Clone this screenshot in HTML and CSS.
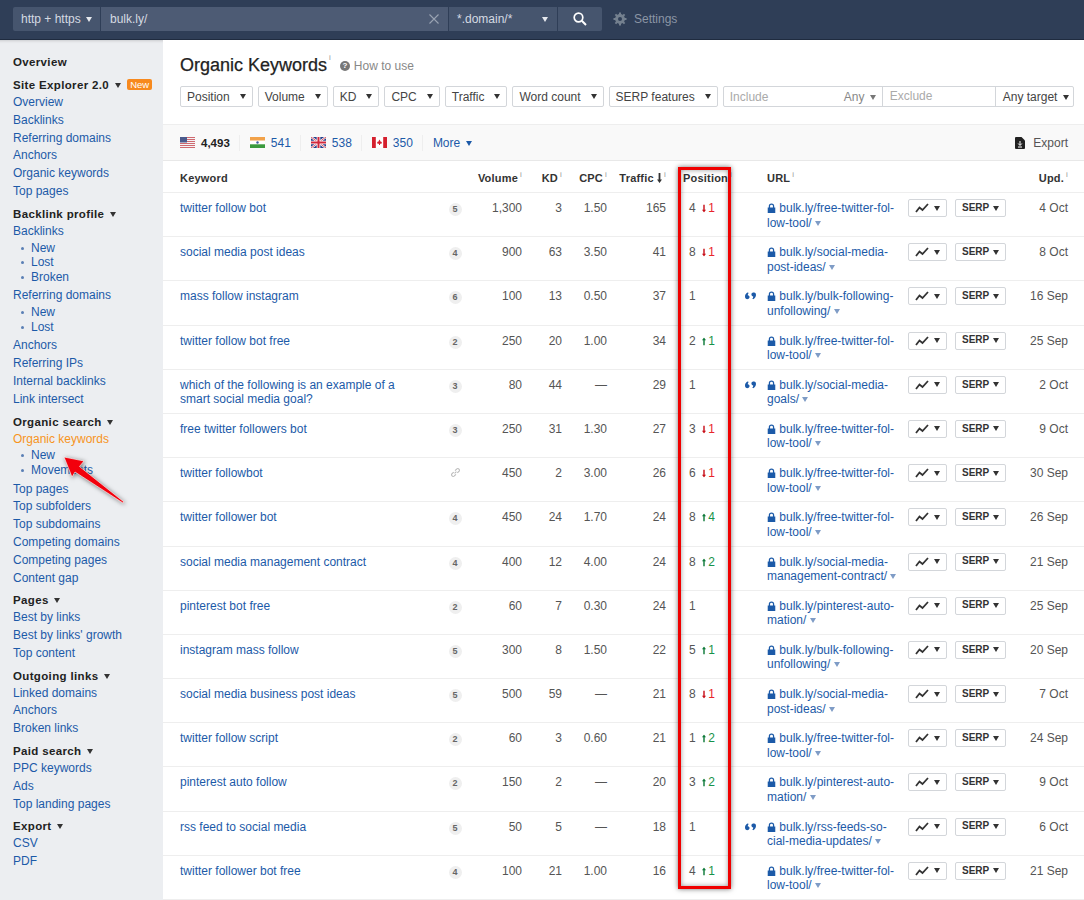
FILE: index.html
```html
<!DOCTYPE html>
<html lang="en">
<head>
<meta charset="UTF-8" />
<title>Organic Keywords</title>
<link rel="stylesheet" href="styles.css">
</head>
<body>

<!-- Shared icons -->
<svg class="icon-defs" aria-hidden="true">
  <symbol id="i-lock" viewBox="0 0 10 11"><path d="M2 5V3.4a3 3 0 0 1 6 0V5h1.2v6H.8V5zm1.4 0h3.2V3.4a1.6 1.6 0 0 0-3.2 0z"/></symbol>
  <symbol id="i-quote" viewBox="0 0 12 8"><path d="M3 0C1.400 1 0 2.500 0 4.600 0 6.500 1.100 7.600 2.500 7.600S5 6.500 5 5.200 4.200 3.200 3 3.100c0-1 .4-1.800 1-2.400zM9 7.600c1.600-1 3-2.500 3-4.600C12 1.100 10.900 0 9.500 0S7 1.100 7 2.400 7.800 4.400 9 4.500c0 1-.4 1.800-1 2.400z"/></symbol>
  <symbol id="i-trend" viewBox="0 0 14 10"><path d="M1 9l3.500-4.500L7.500 7 13 1" fill="none" stroke="currentColor" stroke-width="1.800"/></symbol>
  <symbol id="i-down" viewBox="0 0 5 10"><path d="M1.600 0h1.800v6.500H5L2.500 10 0 6.500h1.600z"/></symbol>
  <symbol id="i-up" viewBox="0 0 5 10"><path d="M1.600 10h1.800V3.500H5L2.500 0 0 3.500h1.600z"/></symbol>
</svg>

<!-- Top bar -->
<div class="top-bar">
  <div class="search-group">
    <div class="sg-proto">http + https <span class="caret caret-light"></span></div>
    <div class="sg-url">bulk.ly/
      <svg class="sg-clear" viewBox="0 0 10 10"><path d="M.5.500l9 9M9.500.500l-9 9" stroke="#9aa3b2" stroke-width="1.100"/></svg>
    </div>
    <div class="sg-mode">*.domain/* <span class="caret caret-light"></span></div>
    <div class="sg-go">
      <svg viewBox="0 0 14 14" width="14" height="14"><circle cx="5.500" cy="5.500" r="4.300" fill="none" stroke="#fff" stroke-width="1.700"/><path d="M8.800 8.800L13 13" stroke="#fff" stroke-width="2"/></svg>
    </div>
  </div>
  <div class="settings">
    <svg viewBox="0 0 14 14" width="14" height="14"><circle cx="7" cy="7" r="3.600" fill="none" stroke="#74808f" stroke-width="2.600"/><path d="M7 .500v13M.500 7h13M2.400 2.400l9.200 9.200M11.600 2.400l-9.200 9.200" stroke="#74808f" stroke-width="2"/><circle cx="7" cy="7" r="2" fill="#2f3e57"/></svg>
    Settings
  </div>
</div>

<div class="layout">

  <!-- Sidebar -->
  <div class="sidebar">
    <div class="side-head side-first">Overview</div>
    <div class="side-head side-group">Site Explorer 2.0 <span class="caret"></span> <span class="new-badge">New</span></div>
    <a>Overview</a><a>Backlinks</a><a>Referring domains</a><a>Anchors</a><a>Organic keywords</a><a>Top pages</a>
    <div class="side-head side-group">Backlink profile <span class="caret"></span></div>
    <a>Backlinks</a>
    <ul><li>New</li><li>Lost</li><li>Broken</li></ul>
    <a>Referring domains</a>
    <ul><li>New</li><li>Lost</li></ul>
    <a>Anchors</a><a>Referring IPs</a><a>Internal backlinks</a><a>Link intersect</a>
    <div class="side-head side-group">Organic search <span class="caret"></span></div>
    <a class="active">Organic keywords</a>
    <ul><li>New</li><li>Movements</li></ul>
    <a>Top pages</a><a>Top subfolders</a><a>Top subdomains</a><a>Competing domains</a><a>Competing pages</a><a>Content gap</a>
    <div class="side-head side-group">Pages <span class="caret"></span></div>
    <a>Best by links</a><a>Best by links' growth</a><a>Top content</a>
    <div class="side-head side-group">Outgoing links <span class="caret"></span></div>
    <a>Linked domains</a><a>Anchors</a><a>Broken links</a>
    <div class="side-head side-group">Paid search <span class="caret"></span></div>
    <a>PPC keywords</a><a>Ads</a><a>Top landing pages</a>
    <div class="side-head side-group">Export <span class="caret"></span></div>
    <a>CSV</a><a>PDF</a>
  </div>

  <!-- Main content -->
  <div class="main">
    <div class="title-row">
      <h1>Organic Keywords</h1><sup class="info">i</sup>
      <span class="how-to"><span class="help-dot">?</span> How to use</span>
    </div>

    <div class="filters">
      <div class="filter">Position <span class="caret"></span></div>
      <div class="filter">Volume <span class="caret"></span></div>
      <div class="filter">KD <span class="caret"></span></div>
      <div class="filter">CPC <span class="caret"></span></div>
      <div class="filter">Traffic <span class="caret"></span></div>
      <div class="filter">Word count <span class="caret"></span></div>
      <div class="filter">SERP features <span class="caret"></span></div>
      <div class="filter-search">
        <div class="fs-include"><span>Include</span><span class="fs-any">Any <span class="caret caret-grey"></span></span></div>
        <div class="fs-exclude">Exclude</div>
        <div class="fs-target">Any target <span class="caret"></span></div>
      </div>
    </div>

    <div class="countries">
      <div class="country strong">
        <svg class="flag" viewBox="0 0 15 11"><rect width="15" height="11" fill="#f4f4f6"/><path d="M0 .500h15M0 2.500h15M0 4.500h15M0 6.500h15M0 8.500h15M0 10.500h15" stroke="#cf6a70"/><rect width="7" height="5.500" fill="#4a5a8c"/></svg>
        4,493
      </div>
      <div class="country">
        <svg class="flag" viewBox="0 0 15 11"><rect width="15" height="3.700" fill="#f2a24a"/><rect y="3.700" width="15" height="3.600" fill="#fff"/><rect y="7.300" width="15" height="3.700" fill="#3b9a3e"/><circle cx="7.500" cy="5.500" r="1.200" fill="#3c5a9c"/></svg>
        <a>541</a>
      </div>
      <div class="country">
        <svg class="flag" viewBox="0 0 15 11"><rect width="15" height="11" fill="#26408a"/><path d="M0 0l15 11M15 0L0 11" stroke="#fff" stroke-width="2.200"/><path d="M0 0l15 11M15 0L0 11" stroke="#d2283c" stroke-width=".8"/><path d="M7.500 0v11M0 5.500h15" stroke="#fff" stroke-width="3.600"/><path d="M7.500 0v11M0 5.500h15" stroke="#d2283c" stroke-width="2"/></svg>
        <a>538</a>
      </div>
      <div class="country">
        <svg class="flag" viewBox="0 0 15 11"><rect width="15" height="11" fill="#fff"/><rect width="3.800" height="11" fill="#d5202e"/><rect x="11.200" width="3.800" height="11" fill="#d5202e"/><path d="M7.500 2.500l1.400 2.600 1-.3-.4 2H8v1.300H7V6.800H5.500l-.4-2 1 .3z" fill="#d5202e"/></svg>
        <a>350</a>
      </div>
      <a class="more">More <span class="caret caret-blue"></span></a>
      <div class="export">
        <svg viewBox="0 0 10 12" width="10" height="12"><path d="M1 0h5.500L10 3.500V11a1 1 0 0 1-1 1H1a1 1 0 0 1-1-1V1a1 1 0 0 1 1-1z" fill="#222"/><path d="M5 4v4M3.200 6.500L5 8.500l1.800-2M3 10h4" stroke="#fff" fill="none"/></svg>
        Export
      </div>
    </div>

    <div class="table">
      <div class="row head">
        <div>Keyword</div><div></div>
        <div class="num">Volume<sup class="info">i</sup></div>
        <div class="num">KD<sup class="info">i</sup></div>
        <div class="num">CPC<sup class="info">i</sup></div>
        <div class="num">Traffic <svg class="sort" viewBox="0 0 5 10"><use href="#i-down"/></svg><sup class="info">i</sup></div>
        <div class="pos-head">Position<sup class="info">i</sup></div><div></div>
        <div>URL<sup class="info">i</sup></div><div></div>
        <div class="num">Upd.<sup class="info">i</sup></div>
      </div>

      <div class="row">
        <a class="kw">twitter follow bot</a><div class="wc"><span>5</span></div>
        <div class="num">1,300</div><div class="num">3</div><div class="num">1.50</div><div class="num">165</div>
        <div class="pos">4 <span class="down"><svg viewBox="0 0 5 10"><use href="#i-down"/></svg> 1</span></div><div></div>
        <div class="url"><svg class="lock" viewBox="0 0 10 11"><use href="#i-lock"/></svg> bulk.ly/free-twitter-fol-<br>low-tool/ <span class="caret caret-url"></span></div>
        <div class="acts"><div class="act act-chart"><svg viewBox="0 0 14 10"><use href="#i-trend"/></svg><span class="caret"></span></div><div class="act act-serp">SERP<span class="caret"></span></div></div>
        <div class="num">4 Oct</div>
      </div>

      <div class="row">
        <a class="kw">social media post ideas</a><div class="wc"><span>4</span></div>
        <div class="num">900</div><div class="num">63</div><div class="num">3.50</div><div class="num">41</div>
        <div class="pos">8 <span class="down"><svg viewBox="0 0 5 10"><use href="#i-down"/></svg> 1</span></div><div></div>
        <div class="url"><svg class="lock" viewBox="0 0 10 11"><use href="#i-lock"/></svg> bulk.ly/social-media-<br>post-ideas/ <span class="caret caret-url"></span></div>
        <div class="acts"><div class="act act-chart"><svg viewBox="0 0 14 10"><use href="#i-trend"/></svg><span class="caret"></span></div><div class="act act-serp">SERP<span class="caret"></span></div></div>
        <div class="num">8 Oct</div>
      </div>

      <div class="row">
        <a class="kw">mass follow instagram</a><div class="wc"><span>6</span></div>
        <div class="num">100</div><div class="num">13</div><div class="num">0.50</div><div class="num">37</div>
        <div class="pos">1</div><div class="quote"><svg viewBox="0 0 12 8"><use href="#i-quote"/></svg></div>
        <div class="url"><svg class="lock" viewBox="0 0 10 11"><use href="#i-lock"/></svg> bulk.ly/bulk-following-<br>unfollowing/ <span class="caret caret-url"></span></div>
        <div class="acts"><div class="act act-chart"><svg viewBox="0 0 14 10"><use href="#i-trend"/></svg><span class="caret"></span></div><div class="act act-serp">SERP<span class="caret"></span></div></div>
        <div class="num">16 Sep</div>
      </div>

      <div class="row">
        <a class="kw">twitter follow bot free</a><div class="wc"><span>2</span></div>
        <div class="num">250</div><div class="num">20</div><div class="num">1.00</div><div class="num">34</div>
        <div class="pos">2 <span class="up"><svg viewBox="0 0 5 10"><use href="#i-up"/></svg> 1</span></div><div></div>
        <div class="url"><svg class="lock" viewBox="0 0 10 11"><use href="#i-lock"/></svg> bulk.ly/free-twitter-fol-<br>low-tool/ <span class="caret caret-url"></span></div>
        <div class="acts"><div class="act act-chart"><svg viewBox="0 0 14 10"><use href="#i-trend"/></svg><span class="caret"></span></div><div class="act act-serp">SERP<span class="caret"></span></div></div>
        <div class="num">25 Sep</div>
      </div>

      <div class="row">
        <a class="kw">which of the following is an example of a<br>smart social media goal?</a><div class="wc"><span>3</span></div>
        <div class="num">80</div><div class="num">44</div><div class="num">—</div><div class="num">29</div>
        <div class="pos">1</div><div class="quote"><svg viewBox="0 0 12 8"><use href="#i-quote"/></svg></div>
        <div class="url"><svg class="lock" viewBox="0 0 10 11"><use href="#i-lock"/></svg> bulk.ly/social-media-<br>goals/ <span class="caret caret-url"></span></div>
        <div class="acts"><div class="act act-chart"><svg viewBox="0 0 14 10"><use href="#i-trend"/></svg><span class="caret"></span></div><div class="act act-serp">SERP<span class="caret"></span></div></div>
        <div class="num">2 Oct</div>
      </div>

      <div class="row">
        <a class="kw">free twitter followers bot</a><div class="wc"><span>3</span></div>
        <div class="num">250</div><div class="num">31</div><div class="num">1.30</div><div class="num">27</div>
        <div class="pos">3 <span class="down"><svg viewBox="0 0 5 10"><use href="#i-down"/></svg> 1</span></div><div></div>
        <div class="url"><svg class="lock" viewBox="0 0 10 11"><use href="#i-lock"/></svg> bulk.ly/free-twitter-fol-<br>low-tool/ <span class="caret caret-url"></span></div>
        <div class="acts"><div class="act act-chart"><svg viewBox="0 0 14 10"><use href="#i-trend"/></svg><span class="caret"></span></div><div class="act act-serp">SERP<span class="caret"></span></div></div>
        <div class="num">9 Oct</div>
      </div>

      <div class="row">
        <a class="kw">twitter followbot</a>
        <div class="wc wc-link"><svg viewBox="0 0 12 12" width="11" height="11"><path d="M5 7l2-2M4 5.500L2 7.500a1.800 1.800 0 0 0 2.500 2.500l2-2M8 6.500l2-2A1.800 1.800 0 0 0 7.500 2l-2 2" fill="none" stroke="#bbb" stroke-width="1.200"/></svg></div>
        <div class="num">450</div><div class="num">2</div><div class="num">3.00</div><div class="num">26</div>
        <div class="pos">6 <span class="down"><svg viewBox="0 0 5 10"><use href="#i-down"/></svg> 1</span></div><div></div>
        <div class="url"><svg class="lock" viewBox="0 0 10 11"><use href="#i-lock"/></svg> bulk.ly/free-twitter-fol-<br>low-tool/ <span class="caret caret-url"></span></div>
        <div class="acts"><div class="act act-chart"><svg viewBox="0 0 14 10"><use href="#i-trend"/></svg><span class="caret"></span></div><div class="act act-serp">SERP<span class="caret"></span></div></div>
        <div class="num">30 Sep</div>
      </div>

      <div class="row">
        <a class="kw">twitter follower bot</a><div class="wc"><span>4</span></div>
        <div class="num">450</div><div class="num">24</div><div class="num">1.70</div><div class="num">24</div>
        <div class="pos">8 <span class="up"><svg viewBox="0 0 5 10"><use href="#i-up"/></svg> 4</span></div><div></div>
        <div class="url"><svg class="lock" viewBox="0 0 10 11"><use href="#i-lock"/></svg> bulk.ly/free-twitter-fol-<br>low-tool/ <span class="caret caret-url"></span></div>
        <div class="acts"><div class="act act-chart"><svg viewBox="0 0 14 10"><use href="#i-trend"/></svg><span class="caret"></span></div><div class="act act-serp">SERP<span class="caret"></span></div></div>
        <div class="num">26 Sep</div>
      </div>

      <div class="row">
        <a class="kw">social media management contract</a><div class="wc"><span>4</span></div>
        <div class="num">400</div><div class="num">12</div><div class="num">4.00</div><div class="num">24</div>
        <div class="pos">8 <span class="up"><svg viewBox="0 0 5 10"><use href="#i-up"/></svg> 2</span></div><div></div>
        <div class="url"><svg class="lock" viewBox="0 0 10 11"><use href="#i-lock"/></svg> bulk.ly/social-media-<br>management-contract/ <span class="caret caret-url"></span></div>
        <div class="acts"><div class="act act-chart"><svg viewBox="0 0 14 10"><use href="#i-trend"/></svg><span class="caret"></span></div><div class="act act-serp">SERP<span class="caret"></span></div></div>
        <div class="num">21 Sep</div>
      </div>

      <div class="row">
        <a class="kw">pinterest bot free</a><div class="wc"><span>2</span></div>
        <div class="num">60</div><div class="num">7</div><div class="num">0.30</div><div class="num">24</div>
        <div class="pos">1</div><div></div>
        <div class="url"><svg class="lock" viewBox="0 0 10 11"><use href="#i-lock"/></svg> bulk.ly/pinterest-auto-<br>mation/ <span class="caret caret-url"></span></div>
        <div class="acts"><div class="act act-chart"><svg viewBox="0 0 14 10"><use href="#i-trend"/></svg><span class="caret"></span></div><div class="act act-serp">SERP<span class="caret"></span></div></div>
        <div class="num">25 Sep</div>
      </div>

      <div class="row">
        <a class="kw">instagram mass follow</a><div class="wc"><span>5</span></div>
        <div class="num">300</div><div class="num">8</div><div class="num">1.50</div><div class="num">22</div>
        <div class="pos">5 <span class="up"><svg viewBox="0 0 5 10"><use href="#i-up"/></svg> 1</span></div><div></div>
        <div class="url"><svg class="lock" viewBox="0 0 10 11"><use href="#i-lock"/></svg> bulk.ly/bulk-following-<br>unfollowing/ <span class="caret caret-url"></span></div>
        <div class="acts"><div class="act act-chart"><svg viewBox="0 0 14 10"><use href="#i-trend"/></svg><span class="caret"></span></div><div class="act act-serp">SERP<span class="caret"></span></div></div>
        <div class="num">20 Sep</div>
      </div>

      <div class="row">
        <a class="kw">social media business post ideas</a><div class="wc"><span>5</span></div>
        <div class="num">500</div><div class="num">59</div><div class="num">—</div><div class="num">21</div>
        <div class="pos">8 <span class="down"><svg viewBox="0 0 5 10"><use href="#i-down"/></svg> 1</span></div><div></div>
        <div class="url"><svg class="lock" viewBox="0 0 10 11"><use href="#i-lock"/></svg> bulk.ly/social-media-<br>post-ideas/ <span class="caret caret-url"></span></div>
        <div class="acts"><div class="act act-chart"><svg viewBox="0 0 14 10"><use href="#i-trend"/></svg><span class="caret"></span></div><div class="act act-serp">SERP<span class="caret"></span></div></div>
        <div class="num">7 Oct</div>
      </div>

      <div class="row">
        <a class="kw">twitter follow script</a><div class="wc"><span>2</span></div>
        <div class="num">60</div><div class="num">3</div><div class="num">0.60</div><div class="num">21</div>
        <div class="pos">1 <span class="up"><svg viewBox="0 0 5 10"><use href="#i-up"/></svg> 2</span></div><div></div>
        <div class="url"><svg class="lock" viewBox="0 0 10 11"><use href="#i-lock"/></svg> bulk.ly/free-twitter-fol-<br>low-tool/ <span class="caret caret-url"></span></div>
        <div class="acts"><div class="act act-chart"><svg viewBox="0 0 14 10"><use href="#i-trend"/></svg><span class="caret"></span></div><div class="act act-serp">SERP<span class="caret"></span></div></div>
        <div class="num">24 Sep</div>
      </div>

      <div class="row">
        <a class="kw">pinterest auto follow</a><div class="wc"><span>2</span></div>
        <div class="num">150</div><div class="num">2</div><div class="num">—</div><div class="num">20</div>
        <div class="pos">3 <span class="up"><svg viewBox="0 0 5 10"><use href="#i-up"/></svg> 2</span></div><div></div>
        <div class="url"><svg class="lock" viewBox="0 0 10 11"><use href="#i-lock"/></svg> bulk.ly/pinterest-auto-<br>mation/ <span class="caret caret-url"></span></div>
        <div class="acts"><div class="act act-chart"><svg viewBox="0 0 14 10"><use href="#i-trend"/></svg><span class="caret"></span></div><div class="act act-serp">SERP<span class="caret"></span></div></div>
        <div class="num">9 Oct</div>
      </div>

      <div class="row">
        <a class="kw">rss feed to social media</a><div class="wc"><span>5</span></div>
        <div class="num">50</div><div class="num">5</div><div class="num">—</div><div class="num">18</div>
        <div class="pos">1</div><div class="quote"><svg viewBox="0 0 12 8"><use href="#i-quote"/></svg></div>
        <div class="url"><svg class="lock" viewBox="0 0 10 11"><use href="#i-lock"/></svg> bulk.ly/rss-feeds-so-<br>cial-media-updates/ <span class="caret caret-url"></span></div>
        <div class="acts"><div class="act act-chart"><svg viewBox="0 0 14 10"><use href="#i-trend"/></svg><span class="caret"></span></div><div class="act act-serp">SERP<span class="caret"></span></div></div>
        <div class="num">6 Oct</div>
      </div>

      <div class="row">
        <a class="kw">twitter follower bot free</a><div class="wc"><span>4</span></div>
        <div class="num">100</div><div class="num">21</div><div class="num">1.00</div><div class="num">16</div>
        <div class="pos">4 <span class="up"><svg viewBox="0 0 5 10"><use href="#i-up"/></svg> 1</span></div><div></div>
        <div class="url"><svg class="lock" viewBox="0 0 10 11"><use href="#i-lock"/></svg> bulk.ly/free-twitter-fol-<br>low-tool/ <span class="caret caret-url"></span></div>
        <div class="acts"><div class="act act-chart"><svg viewBox="0 0 14 10"><use href="#i-trend"/></svg><span class="caret"></span></div><div class="act act-serp">SERP<span class="caret"></span></div></div>
        <div class="num">21 Sep</div>
      </div>
    </div>
  </div>
</div>

<!-- Annotations drawn over the screenshot -->
<div class="mark-box"></div>
<svg class="mark-arrow" viewBox="0 0 70 60" width="70" height="60">
  <path d="M4 6L24 10 19.500 15.500 64 51 63 52 15 21 12 26z" fill="#f2000c" stroke="#fff" stroke-width=".6"/>
</svg>

</body>
</html>
```

FILE: styles.css
```css
/* Reset and base */
* {
  box-sizing: border-box;
}
html, body {
  height: 900px;
  overflow: hidden;
}
body {
  margin: 0;
  position: relative;
  font-family: "Liberation Sans", Arial, sans-serif;
  font-size: 12px;
  color: #555;
  background-color: #fff;
}
a {
  color: #1c5aa8;
}
.icon-defs {
  display: none;
}

/* Small triangles */
.caret {
  display: inline-block;
  width: 0;
  height: 0;
  margin-left: 2px;
  vertical-align: 1px;
  border-left: 3.5px solid transparent;
  border-right: 3.5px solid transparent;
  border-top: 5px solid #333;
}
.caret-light { border-top-color: #e6e9ee; }
.caret-grey { border-top-color: #777; }
.caret-blue { border-top-color: #1c5aa8; }
.caret-url { border-top-color: #7f9cc6; margin-left: 0; }

/* Top bar */
.top-bar {
  display: flex;
  align-items: center;
  height: 40px;
  padding: 0 0 1px 13px;
  background-color: #2f3e57;
  border-bottom: 1px solid #1f2b3f;
  color: #d5dae2;
}
.search-group {
  display: flex;
  width: 589px;
  height: 24px;
  line-height: 24px;
  gap: 1px;
}
.sg-proto {
  width: 87px;
  padding-left: 8px;
  background-color: #46556e;
  border-radius: 2px 0 0 2px;
}
.sg-url {
  display: flex;
  align-items: center;
  justify-content: space-between;
  width: 347px;
  padding: 0 9px;
  background-color: #4d5b74;
}
.sg-clear {
  width: 10px;
  height: 10px;
}
.sg-mode {
  display: flex;
  align-items: center;
  justify-content: space-between;
  width: 108px;
  padding: 0 9px 0 8px;
  background-color: #46556e;
}
.sg-go {
  display: flex;
  align-items: center;
  justify-content: center;
  flex: 1;
  background-color: #46556e;
  border-radius: 0 2px 2px 0;
}
.settings {
  display: flex;
  align-items: center;
  gap: 7px;
  margin-left: 11px;
  color: #8b95a5;
}

/* Page columns */
.layout {
  display: flex;
  height: 860px;
}
.sidebar {
  width: 163px;
  flex-shrink: 0;
  padding: 14px 0 0 13px;
  background-color: #eceef1;
  box-shadow: inset 0 4px 3px -3px rgba(0,0,0,0.15);
}
.sidebar a {
  display: block;
  line-height: 17.8px;
}
.sidebar a.active {
  color: #f7941d;
}
.side-head {
  color: #222;
  font-weight: bold;
  font-size: 11.5px;
  letter-spacing: 0.35px;
  line-height: 17px;
}
.side-group {
  margin-top: 5px;
}
.side-first + .side-group {
  margin-top: 6px;
}
.new-badge {
  display: inline-block;
  margin-left: 3px;
  padding: 0 3px;
  font-size: 9.5px;
  font-weight: normal;
  letter-spacing: 0;
  line-height: 11px;
  vertical-align: 1px;
  color: #fff;
  background-color: #f7891e;
  border-radius: 2px;
}
.sidebar ul {
  margin: 0 0 3px;
  padding: 0 0 0 8px;
  list-style: none;
}
.sidebar li {
  line-height: 14.6px;
  color: #1c5aa8;
  padding-left: 10px;
  position: relative;
}
.sidebar li::before {
  content: "";
  position: absolute;
  left: 0;
  top: 6px;
  width: 3px;
  height: 3px;
  border-radius: 50%;
  background-color: #5a7fb5;
}

/* Main area */
.main {
  flex: 1;
  min-width: 0;
}
.title-row {
  display: flex;
  align-items: flex-start;
  padding: 14px 0 0 17px;
  height: 46px;
}
h1 {
  margin: 0;
  font-size: 18px;
  font-weight: normal;
  line-height: 22px;
  color: #222;
  -webkit-text-stroke: 0.25px #222;
}
.info {
  margin-left: 2px;
  font-size: 8px;
  line-height: 8px;
  color: #999;
  font-weight: normal;
  vertical-align: 5px;
  -webkit-text-stroke: 0;
}
.how-to {
  display: flex;
  align-items: center;
  gap: 4px;
  margin: 5px 0 0 9px;
  color: #888;
}
.help-dot {
  display: inline-block;
  width: 10px;
  height: 10px;
  border-radius: 50%;
  background-color: #777;
  color: #fff;
  font-size: 8px;
  font-weight: bold;
  line-height: 10px;
  text-align: center;
}
.filters {
  display: flex;
  gap: 5px;
  padding-left: 17px;
  height: 38px;
}
.filter {
  display: flex;
  align-items: center;
  justify-content: space-between;
  gap: 8px;
  height: 21px;
  padding: 0 6px;
  color: #444;
  background-color: #fff;
  border: 1px solid #d3d6da;
  border-radius: 2px;
}
.filter-search {
  display: flex;
  height: 21px;
  width: 351px;
  color: #aaa;
  border: 1px solid #d3d6da;
  border-radius: 2px;
}
.fs-include {
  display: flex;
  justify-content: space-between;
  align-items: center;
  width: 158px;
  padding: 0 6px;
}
.fs-any {
  color: #888;
}
.fs-exclude {
  width: 113px;
  padding: 0 7px;
  line-height: 19px;
  border-left: 1px solid #d3d6da;
}
.fs-target {
  flex: 1;
  padding-left: 7px;
  color: #444;
  line-height: 20px;
  border-left: 1px solid #d3d6da;
}
.countries {
  display: flex;
  align-items: center;
  height: 37px;
  padding: 0 16px 0 17px;
  background-color: #f9f9f9;
  border-top: 1px solid #eee;
  border-bottom: 1px solid #e8e8e8;
}
.country {
  display: flex;
  align-items: center;
  gap: 5px;
  height: 16px;
  padding-right: 9px;
  margin-right: 10px;
  border-right: 1px solid #eee;
}
.country.strong {
  color: #222;
  font-weight: bold;
  font-size: 11.5px;
}
.flag {
  width: 15px;
  height: 11px;
  margin-right: 1px;
}
.more .caret {
  vertical-align: 1px;
}
.export {
  display: flex;
  align-items: center;
  gap: 8px;
  margin-left: auto;
  color: #555;
}

/* Keywords table */
.row {
  display: grid;
  grid-template-columns: 260px 30px 52px 40px 45px 59px 79px 22px 141px 98px 62px;
  height: 44.2px;
  padding: 8px 16px 0 17px;
  line-height: 14.5px;
  border-bottom: 1px solid #eee;
}
.row.head {
  height: 32px;
  padding-top: 10px;
  color: #333;
  font-weight: bold;
  font-size: 11px;
  letter-spacing: 0.2px;
}
.row.head > div:first-child {
  font-weight: bold;
}
.num {
  text-align: right;
  white-space: nowrap;
}
.sort {
  width: 5px;
  height: 10px;
  vertical-align: -1px;
  fill: #333;
}
.pos-head {
  padding-left: 17px;
  white-space: nowrap;
}
.wc {
  text-align: center;
}
.wc span {
  display: inline-block;
  width: 13px;
  height: 13px;
  border-radius: 50%;
  background-color: #efefef;
  color: #666;
  font-size: 9px;
  font-weight: bold;
  line-height: 13px;
}
.wc-link svg {
  vertical-align: -1px;
}
.pos {
  padding-left: 23px;
  white-space: nowrap;
}
.down, .up {
  margin-left: 3px;
}
.down { color: #e8252c; }
.up { color: #17924a; }
.down svg, .up svg {
  width: 4px;
  height: 9px;
  fill: currentColor;
  vertical-align: -1px;
  margin-right: -1px;
}
.up svg { fill: #0f7a3a; }
.down svg { fill: #c8101a; }
.quote svg {
  display: block;
  width: 11px;
  height: 8px;
  margin-top: 3px;
  fill: #1c5aa8;
}
.url {
  color: #1c5aa8;
  white-space: nowrap;
}
.lock {
  width: 9px;
  height: 10px;
  fill: #1c5aa8;
  vertical-align: -1px;
}
.acts {
  display: flex;
  gap: 8px;
}
.act {
  display: flex;
  align-items: center;
  justify-content: space-between;
  height: 18px;
  padding: 0 6px;
  margin-top: -2px;
  background-color: #fff;
  border: 1px solid #d3d6da;
  border-radius: 2px;
  color: #333;
  font-size: 10px;
  font-weight: bold;
}
.act-chart { width: 39px; }
.act-serp { width: 51px; }
.act svg {
  width: 14px;
  height: 10px;
  color: #333;
}

/* Annotations */
.mark-box {
  position: absolute;
  left: 678px;
  top: 167px;
  width: 53px;
  height: 722px;
  border: 3px solid #f00000;
  box-shadow: 0 0 5px rgba(0,0,0,0.55), inset 0 0 5px rgba(0,0,0,0.4);
}
.mark-arrow {
  position: absolute;
  left: 60px;
  top: 451px;
  filter: drop-shadow(1px 1px 2px rgba(0,0,0,0.5));
}
```
